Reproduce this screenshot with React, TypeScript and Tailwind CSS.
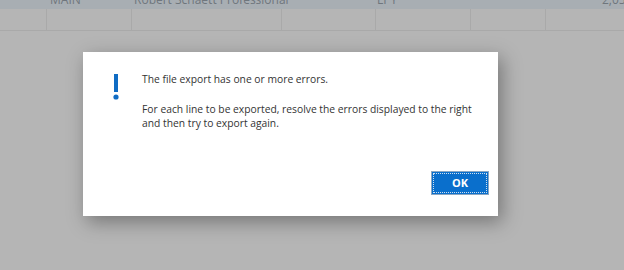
import React from "react";

export default function App() {
  return (
    <div className="relative w-[624px] h-[270px] overflow-hidden bg-[#b5b5b5] font-['Open_Sans',_'Noto_Sans',_sans-serif]">
      <div className="h-[9px] bg-[#a8aeb3] overflow-hidden text-[12px] text-[#6f767d] leading-[14px]">
        <div className="flex -mt-[7px] whitespace-nowrap">
          <span className="ml-[50px] w-[84px] shrink-0">MAIN</span>
          <span className="w-[243px] shrink-0">Robert Schaett Professional</span>
          <span className="w-[225px] shrink-0">LPY</span>
          <span>2,05</span>
        </div>
      </div>
      <div className="flex h-[22px] border-b border-[#a9a9a9]">
        <div className="w-[47px] shrink-0 border-r border-[#a9a9a9]" />
        <div className="w-[85px] shrink-0 border-r border-[#a9a9a9]" />
        <div className="w-[150px] shrink-0 border-r border-[#a9a9a9]" />
        <div className="w-[94px] shrink-0 border-r border-[#a9a9a9]" />
        <div className="w-[95px] shrink-0 border-r border-[#a9a9a9]" />
        <div className="w-[75px] shrink-0 border-r border-[#a9a9a9]" />
        <div className="flex-1" />
      </div>

      <div className="absolute left-[83px] top-[52px] w-[415px] h-[164px] bg-white shadow-[4px_6px_18px_rgba(0,0,0,0.35)]">
        <div className="flex pt-[20px]">
          <div className="w-[59px] shrink-0 pl-[30px] pt-[2px]">
            <svg width="6" height="26" viewBox="0 0 6 26">
              <rect x="1" y="0" width="4" height="18" fill="#0f6cc4" />
              <circle cx="3" cy="23" r="2.6" fill="#0f6cc4" />
            </svg>
          </div>
          <div className="text-[10.3px] leading-[14px] text-[#333333] whitespace-nowrap">
            <p>The file export has one or more errors.</p>
            <p className="mt-[16px]">For each line to be exported, resolve the errors displayed to the right</p>
            <p>and then try to export again.</p>
          </div>
        </div>
        <div className="absolute left-[348px] top-[119px] w-[58px] h-[24px] bg-[#0a6fcc] border border-[#8aa6c2] flex items-center justify-center">
          <div className="absolute inset-[1px] border border-dotted border-[#cfe0f0]" />
          <span className="text-white text-[11px] font-bold">OK</span>
        </div>
      </div>
    </div>
  );
}
